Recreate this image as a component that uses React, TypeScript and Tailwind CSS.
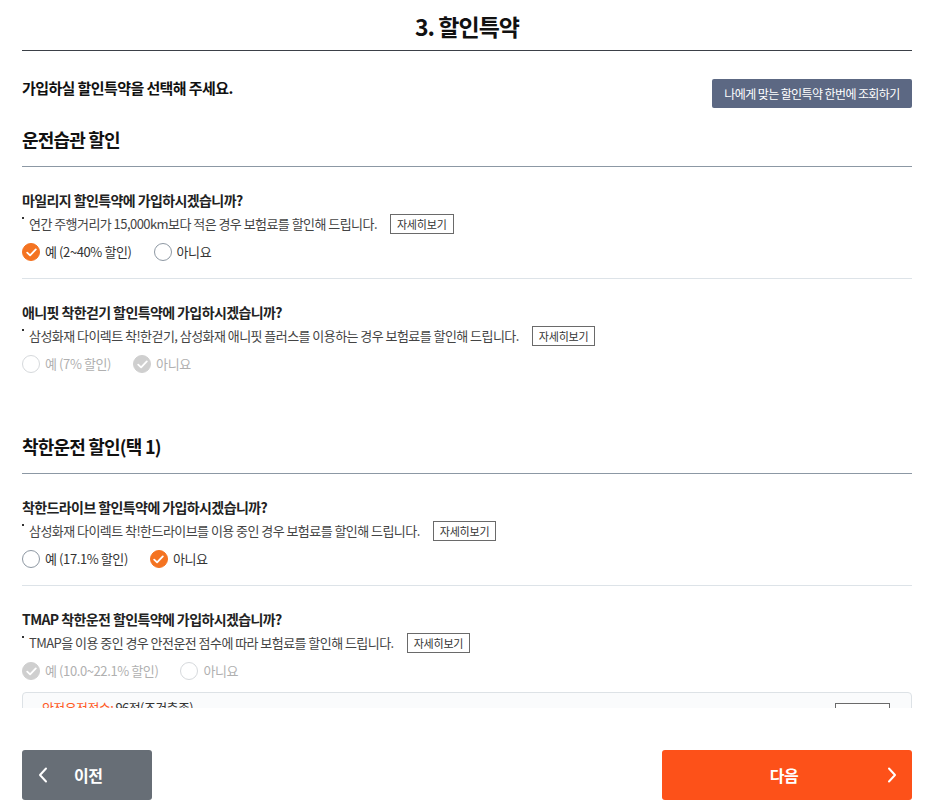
import React from 'react';

type Opt = { label: string; checked?: boolean };

const font = { fontFamily: '"Noto Sans CJK KR", "Noto Sans", sans-serif' };

const Radio: React.FC<Opt & { disabled?: boolean }> = ({ label, checked, disabled }) => {
  const circle = checked
    ? disabled
      ? 'bg-[#cfcfcf] border-[#cfcfcf]'
      : 'bg-[#f47321] border-[#f47321]'
    : disabled
      ? 'bg-white border-[#d6d9dc]'
      : 'bg-white border-[#8e98a3]';
  return (
    <label className="flex items-center gap-[5px]">
      <span className={`w-[18px] h-[18px] rounded-full border flex items-center justify-center ${circle}`}>
        {checked && (
          <svg width="11" height="9" viewBox="0 0 11 9" fill="none">
            <path d="M1.2 4.6 L4.1 7.4 L9.8 1.4" stroke="#fff" strokeWidth="1.8" strokeLinecap="round" strokeLinejoin="round" />
          </svg>
        )}
      </span>
      <span className={`text-[13px] leading-[24px] tracking-[-0.4px] ${disabled ? 'text-[#b0b0b0]' : 'text-[#333]'}`}>{label}</span>
    </label>
  );
};

const Question: React.FC<{
  title: string;
  desc: string;
  options: Opt[];
  disabled?: boolean;
  divider?: boolean;
  children?: React.ReactNode;
}> = ({ title, desc, options, disabled, divider, children }) => (
  <div className={`pt-[23px] ${divider ? 'pb-[14px] border-b border-[#dde3e8]' : ''}`}>
    <p className="text-[14px] leading-[20px] font-bold text-[#222] tracking-[-0.6px]">{title}</p>
    <div className="mt-[4px] flex items-center">
      <span className="relative pl-[7px] text-[13px] leading-[20px] text-[#444] tracking-[-0.55px]">
        <span className="absolute left-0 top-[3px] w-[2px] h-[2px] bg-[#333]" />
        {desc}
      </span>
      <button className="ml-[13px] h-[20px] px-[6px] border border-[#6a6a6a] bg-white text-[11px] leading-[18px] text-[#333] tracking-[-0.2px]">
        자세히보기
      </button>
    </div>
    <div className="mt-[6px] flex items-center gap-[22px]">
      {options.map((o) => (
        <Radio key={o.label} {...o} disabled={disabled} />
      ))}
    </div>
    {children}
  </div>
);

const SectionHead: React.FC<{ title: string; className?: string }> = ({ title, className }) => (
  <div className={`h-[39px] border-b border-[#8c98a4] ${className ?? ''}`}>
    <h3 className="text-[18px] leading-[22px] font-bold text-[#111] tracking-[-0.8px]">{title}</h3>
  </div>
);

const Chevron: React.FC<{ dir: 'left' | 'right' }> = ({ dir }) => (
  <svg width="10" height="16" viewBox="0 0 10 16" fill="none">
    <path
      d={dir === 'left' ? 'M8 1.5 L2 8 L8 14.5' : 'M2 1.5 L8 8 L2 14.5'}
      stroke="#fff"
      strokeWidth="2"
      strokeLinecap="round"
      strokeLinejoin="round"
    />
  </svg>
);

export default function App() {
  return (
    <div className="w-[929px] h-[808px] bg-white flex flex-col" style={font}>
      <div className="h-[708px] overflow-hidden pl-[22px] pr-[17px] shrink-0">
        <div className="h-[51px] border-b border-[#3b4047] flex justify-center pt-[10px]">
          <h1 className="text-[23px] leading-[32px] font-bold text-[#111] tracking-[-1px]">3. 할인특약</h1>
        </div>

        <div className="mt-[28px] flex items-start justify-between">
          <p className="text-[15px] leading-[18px] font-bold text-[#111] tracking-[-0.6px]">가입하실 할인특약을 선택해 주세요.</p>
          <button className="w-[200px] h-[29px] rounded-[2px] bg-[#5c6883] text-white text-[12px] tracking-[-0.6px]">
            나에게 맞는 할인특약 한번에 조회하기
          </button>
        </div>

        <SectionHead title="운전습관 할인" className="mt-[20px]" />
        <Question
          title="마일리지 할인특약에 가입하시겠습니까?"
          desc="연간 주행거리가 15,000km보다 적은 경우 보험료를 할인해 드립니다."
          options={[{ label: '예 (2~40% 할인)', checked: true }, { label: '아니요' }]}
          divider
        />
        <Question
          title="애니핏 착한걷기 할인특약에 가입하시겠습니까?"
          desc="삼성화재 다이렉트 착!한걷기, 삼성화재 애니핏 플러스를 이용하는 경우 보험료를 할인해 드립니다."
          options={[{ label: '예 (7% 할인)' }, { label: '아니요', checked: true }]}
          disabled
        />

        <SectionHead title="착한운전 할인(택 1)" className="mt-[59px]" />
        <Question
          title="착한드라이브 할인특약에 가입하시겠습니까?"
          desc="삼성화재 다이렉트 착!한드라이브를 이용 중인 경우 보험료를 할인해 드립니다."
          options={[{ label: '예 (17.1% 할인)' }, { label: '아니요', checked: true }]}
          divider
        />
        <Question
          title="TMAP 착한운전 할인특약에 가입하시겠습니까?"
          desc="TMAP을 이용 중인 경우 안전운전 점수에 따라 보험료를 할인해 드립니다."
          options={[{ label: '예 (10.0~22.1% 할인)', checked: true }, { label: '아니요' }]}
          disabled
        >
          <div className="mt-[9px] border border-[#dde2e6] rounded-[4px] bg-[#fafbfc] pl-[19px] pr-[21px] pt-[5px] pb-[12px] flex items-start justify-between">
            <p className="text-[13px] leading-[20px] tracking-[-0.6px] text-[#333]">
              <span className="text-[#ff5a1f]">안전운전점수:</span> 96점(조건충족)
            </p>
            <button className="mt-[5px] h-[20px] px-[6px] border border-[#6a6a6a] bg-white text-[11px] leading-[18px] text-[#333] tracking-[-0.3px]">
              결과 확인
            </button>
          </div>
        </Question>
      </div>

      <div className="pl-[22px] pr-[17px] pt-[42px] flex justify-between">
        <button className="w-[130px] h-[50px] rounded-[3px] bg-[#676e76] flex items-center pl-[16px] gap-[26px] text-white">
          <Chevron dir="left" />
          <span className="text-[16px] font-bold tracking-[-0.4px]">이전</span>
        </button>
        <button className="relative w-[250px] h-[50px] rounded-[3px] bg-[#fd5119] flex items-center justify-center pr-[6px] text-white">
          <span className="text-[16px] font-bold tracking-[-0.4px]">다음</span>
          <span className="absolute right-[15px] top-[17px]">
            <Chevron dir="right" />
          </span>
        </button>
      </div>
    </div>
  );
}
